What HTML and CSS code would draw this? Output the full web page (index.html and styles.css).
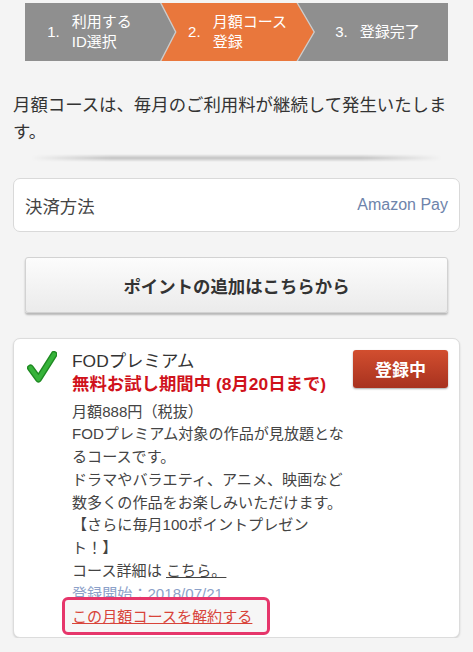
FILE: index.html
```html
<!DOCTYPE html>
<html lang="ja">
<head>
<meta charset="utf-8">
<title>月額コース登録</title>
<link rel="stylesheet" href="styles.css">
</head>
<body>
<div class="page">
  <ol class="steps">
    <li class="step step-first"><span class="num">1.</span><span class="label">利用する<br>ID選択</span></li>
    <li class="step current"><span class="num">2.</span><span class="label">月額コース<br>登録</span></li>
    <li class="step step-last"><span class="num">3.</span><span class="label">登録完了</span></li>
  </ol>

  <p class="intro">月額コースは、毎月のご利用料が継続して発生いたします。</p>
  <div class="divider"></div>

  <div class="payment">
    <span class="pay-label">決済方法</span>
    <span class="pay-value">Amazon Pay</span>
  </div>

  <button class="add-points" type="button">ポイントの追加はこちらから</button>

  <section class="course">
    <svg class="check" viewBox="0 0 30 32" width="30" height="32" aria-hidden="true">
      <path d="M3.5 17 L11.5 28 L27 3.5" fill="none" stroke="#1f8a22" stroke-width="7" stroke-linecap="round" stroke-linejoin="round"/>
      <path d="M3.5 17 L11.5 28 L27 3.5" fill="none" stroke="#36b33a" stroke-width="4.2" stroke-linecap="round" stroke-linejoin="round"/>
    </svg>
    <div class="course-body">
      <h2 class="course-title">FODプレミアム</h2>
      <p class="trial">無料お試し期間中 (8月20日まで)</p>
      <div class="desc">
        <p>月額888円（税抜）</p>
        <p>FODプレミアム対象の作品が見放題となるコースです。</p>
        <p>ドラマやバラエティ、アニメ、映画など数多くの作品をお楽しみいただけます。</p>
        <p>【さらに毎月100ポイントプレゼント！】</p>
        <p>コース詳細は <a class="link" href="#">こちら。</a></p>
        <p class="since">登録開始：2018/07/21</p>
        <p class="cancel"><a href="#">この月額コースを解約する</a></p>
      </div>
    </div>
    <button class="status" type="button">登録中</button>
  </section>
</div>
</body>
</html>
```

FILE: styles.css
```css
body {
  margin: 0;
  background: #f4f4f4;
  font-family: "Liberation Sans", "Noto Sans CJK JP", sans-serif;
  color: #333;
  text-spacing-trim: space-all;
}

.page {
  padding: 3px 13px 0;
}

/* stepper */
.steps {
  list-style: none;
  margin: 0 12px;
  padding: 0;
  display: grid;
  grid-template-columns: 135px 155px 1fr;
  height: 58px;
  background: #8f8f8f;
  color: #fff;
  font-size: 15px;
  line-height: 20px;
}

.step {
  position: relative;
  display: flex;
  align-items: center;
  justify-content: center;
  gap: 12px;
}

.step-first {
  padding-right: 6px;
}

.step-last {
  padding-right: 8px;
}

.num,
.label {
  position: relative;
  z-index: 1;
}

.step.current::before,
.step.current::after {
  content: "";
  position: absolute;
  inset: 0;
}

.step.current::before {
  background: rgba(255, 255, 255, 0.55);
  clip-path: polygon(0 0, calc(100% - 17px) 0, 100% 50%, calc(100% - 17px) 100%, 0 100%, 15px 50%);
}

.step.current::after {
  background: #e9773c;
  clip-path: polygon(1.5px 0, calc(100% - 18.5px) 0, calc(100% - 1.5px) 50%, calc(100% - 18.5px) 100%, 1.5px 100%, 16.5px 50%);
}

/* intro */
.intro {
  margin: 30.5px 0 0;
  font-size: 17.4px;
  line-height: 27px;
  color: #333;
}

.divider {
  height: 8px;
  margin-top: 8.5px;
  background: linear-gradient(to bottom, rgba(0, 0, 0, 0), rgba(0, 0, 0, 0.2) 50%, rgba(0, 0, 0, 0));
  -webkit-mask-image: linear-gradient(to right, transparent 4%, #000 22%, #000 78%, transparent 96%);
  mask-image: linear-gradient(to right, transparent 4%, #000 22%, #000 78%, transparent 96%);
}

/* payment */
.payment {
  margin-top: 16px;
  height: 54px;
  box-sizing: border-box;
  background: #fff;
  border: 1px solid #d9d9d9;
  border-radius: 7px;
  display: flex;
  align-items: center;
  justify-content: space-between;
  padding: 0 11px;
}

.pay-label {
  font-size: 17.4px;
  color: #444;
}

.pay-value {
  font-size: 16px;
  color: #6e84ab;
}

/* add points button */
.add-points {
  display: block;
  width: calc(100% - 24px);
  margin: 25px 12px 0;
  height: 56px;
  border: 1px solid #d2d2d2;
  border-radius: 3px;
  background: linear-gradient(#fcfcfc, #ebebeb);
  box-shadow: 0 2px 2px rgba(0, 0, 0, 0.25);
  font-family: "Liberation Sans", "Noto Sans CJK JP", sans-serif;
  font-size: 17.4px;
  font-weight: bold;
  color: #333;
}

/* course card */
.course {
  margin-top: 25px;
  background: #fff;
  border: 1px solid #dcdcdc;
  border-radius: 7px;
  box-shadow: 0 1px 2px rgba(0, 0, 0, 0.15);
  display: grid;
  grid-template-columns: 40px 1fr 95px;
  column-gap: 5px;
  align-items: start;
  padding: 10.5px 11px 8.5px 13px;
}

.check {
  display: block;
  margin-top: 1.5px;
}

.course-title {
  margin: 0;
  font-size: 17.4px;
  line-height: 23px;
  font-weight: normal;
  color: #333;
}

.trial {
  margin: 0;
  font-size: 17.4px;
  line-height: 23px;
  font-weight: bold;
  color: #d0121b;
}

.desc {
  margin-top: 5px;
  font-size: 15.1px;
  line-height: 22.8px;
  color: #444;
}

.desc p {
  margin: 0;
}

.link {
  color: #444;
  text-decoration: underline;
}

.since {
  color: #8ca1c9;
}

.cancel {
  position: relative;
}

.cancel::before {
  content: "";
  position: absolute;
  left: -10px;
  top: -9px;
  width: 208px;
  height: 38px;
  box-sizing: border-box;
  border: 3px solid #e6366b;
  border-radius: 6px;
  background: #f6f6f6;
}

.cancel a {
  position: relative;
  z-index: 1;
  color: #d8443a;
  text-decoration: underline;
}

.status {
  height: 38px;
  border: 0;
  border-radius: 3px;
  background: linear-gradient(#d24e2f, #a8321f);
  box-shadow: 0 1px 2px rgba(0, 0, 0, 0.35);
  color: #fff;
  font-family: "Liberation Sans", "Noto Sans CJK JP", sans-serif;
  font-size: 17px;
  font-weight: bold;
}
```
